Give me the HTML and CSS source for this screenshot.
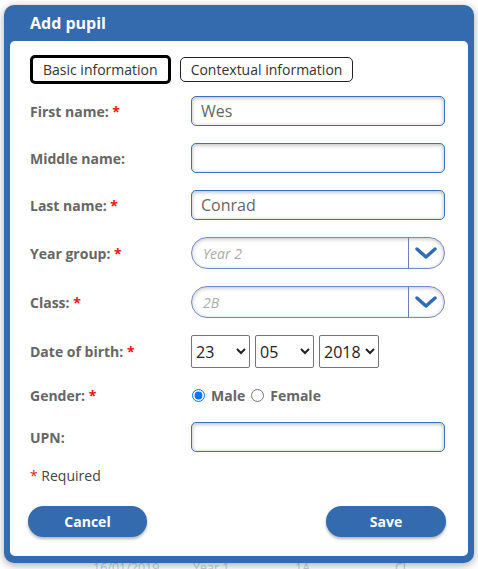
FILE: index.html
```html
<!DOCTYPE html>
<html>
<head>
<meta charset="utf-8">
<link rel="stylesheet" href="styles.css">
</head>
<body>
<div class="page">
  <div class="bg-row">
    <span class="c1">16/01/2019</span>
    <span class="c2">Year 1</span>
    <span class="c3">1A</span>
    <span class="c4">Cl</span>
  </div>
</div>
<div class="modal">
  <div class="modal-header">Add pupil</div>
  <div class="modal-body">
    <div class="tabs">
      <button class="tab tab-active">Basic information</button>
      <button class="tab">Contextual information</button>
    </div>
    <div class="form">
      <label class="lbl">First name: <span class="req">*</span></label>
      <div class="field h30"><input class="txt" type="text" value="Wes"></div>

      <label class="lbl">Middle name:</label>
      <div class="field h30"><input class="txt" type="text" value=""></div>

      <label class="lbl">Last name: <span class="req">*</span></label>
      <div class="field h30"><input class="txt" type="text" value="Conrad"></div>

      <label class="lbl">Year group: <span class="req">*</span></label>
      <div class="field h32">
        <div class="combo">
          <span class="combo-val">Year 2</span>
          <span class="combo-btn"><svg width="22" height="12" viewBox="0 0 22 12"><path d="M2 2 L11 10 L20 2" fill="none" stroke="#2f6cb2" stroke-width="3.4" stroke-linecap="round" stroke-linejoin="round"/></svg></span>
        </div>
      </div>

      <label class="lbl">Class: <span class="req">*</span></label>
      <div class="field h32">
        <div class="combo">
          <span class="combo-val">2B</span>
          <span class="combo-btn"><svg width="22" height="12" viewBox="0 0 22 12"><path d="M2 2 L11 10 L20 2" fill="none" stroke="#2f6cb2" stroke-width="3.4" stroke-linecap="round" stroke-linejoin="round"/></svg></span>
        </div>
      </div>

      <label class="lbl">Date of birth: <span class="req">*</span></label>
      <div class="field h33 dob">
        <select class="sel"><option>23</option></select>
        <select class="sel"><option>05</option></select>
        <select class="sel"><option>2018</option></select>
      </div>

      <label class="lbl">Gender: <span class="req">*</span></label>
      <div class="field h20 gender">
        <label class="radio"><input type="radio" name="g" checked> Male</label>
        <label class="radio"><input type="radio" name="g"> Female</label>
      </div>

      <label class="lbl">UPN:</label>
      <div class="field h30"><input class="txt" type="text" value=""></div>
    </div>
    <div class="required"><span class="req-plain">*</span> Required</div>
    <div class="actions">
      <button class="btn btn-cancel">Cancel</button>
      <button class="btn">Save</button>
    </div>
  </div>
</div>
</body>
</html>
```
FILE: styles.css
```css
* { box-sizing: border-box; }
html, body {
  margin: 0;
  padding: 0;
  width: 478px;
  height: 569px;
  overflow: hidden;
  background: #ffffff;
  font-family: "Open Sans", "Noto Sans", sans-serif;
}
.page {
  padding-top: 559px;
}
.bg-row {
  display: flex;
  font-size: 12.5px;
  color: #cdcdcd;
  height: 20px;
}
.bg-row .c1 { margin-left: 93px; width: 100px; }
.bg-row .c2 { width: 102px; }
.bg-row .c3 { width: 100px; }

.modal {
  position: absolute;
  left: 4px;
  top: 5px;
  width: 470px;
  background: #336bae;
  border-radius: 10px;
  padding: 0 6px 7px 6px;
  box-shadow: 0 2px 8px rgba(0,0,0,0.35);
}
.modal-header {
  height: 36px;
  line-height: 36px;
  padding-left: 20px;
  color: #ffffff;
  font-weight: 700;
  font-size: 16px;
}
.modal-body {
  background: #ffffff;
  border-radius: 5px;
  padding: 14px 22px 19px 20px;
}
.tabs {
  display: flex;
  align-items: center;
  gap: 9px;
  height: 29px;
}
.tab {
  font-family: "Open Sans", sans-serif;
  font-size: 14px;
  color: #333;
  background: #fff;
  border: 1px solid #222;
  border-radius: 5px;
  height: 25px;
  padding: 0 10px;
  line-height: 21px;
  white-space: nowrap;
}
.tab-active {
  border: 3px solid #000;
  height: 29px;
  padding: 0 10px;
}
.form {
  margin-top: 12px;
  display: grid;
  grid-template-columns: 161px 254px;
  row-gap: 17px;
  align-items: center;
}
.lbl {
  font-weight: 700;
  font-size: 14px;
  color: #666;
}
.req {
  color: #ee1111;
  font-weight: 700;
}
.field { display: flex; align-items: center; }
.h30 { height: 30px; }
.h32 { height: 32px; }
.h33 { height: 33px; }
.h20 { height: 20px; }
.txt {
  width: 100%;
  height: 100%;
  border: 1px solid #3b70b4;
  border-radius: 5px;
  box-shadow: inset 0 1px 4px rgba(0,0,0,0.3);
  font-family: "Open Sans", sans-serif;
  font-size: 16px;
  color: #666;
  padding: 0 9px;
  outline: none;
}
.combo {
  display: flex;
  width: 100%;
  height: 100%;
  border: 1px solid #7289c6;
  border-radius: 16px;
  box-shadow: inset 0 1px 4px rgba(0,0,0,0.25);
  overflow: hidden;
}
.combo-val {
  flex: 1;
  display: flex;
  align-items: center;
  padding-left: 11px;
  font-style: italic;
  font-size: 14px;
  color: #aaa;
}
.combo-btn {
  width: 36px;
  border-left: 1px solid #6c7fb8;
  display: flex;
  align-items: center;
  justify-content: center;
  padding-right: 2px;
}
.dob { gap: 5px; }
.sel {
  width: 59px;
  height: 33px;
  font-family: "Open Sans", sans-serif;
  font-size: 16px;
  color: #222;
  border: 1px solid #767676;
  border-radius: 2px;
  background: #fff;
}
.sel:last-child { width: 60px; }
.gender { gap: 6px; }
.radio {
  display: flex;
  align-items: center;
  gap: 6px;
  font-weight: 700;
  font-size: 14px;
  color: #666;
}
.radio input {
  margin: 0 0 0 1px;
  width: 13px;
  height: 13px;
}
.radio + .radio input { margin-left: 0; }
.required {
  margin-top: 14px;
  font-size: 14px;
  line-height: 20px;
  color: #444;
}
.req-plain { color: #ee1111; }
.actions {
  margin-top: 20px;
  display: flex;
  justify-content: space-between;
}
.btn {
  width: 120px;
  height: 31px;
  border: none;
  border-radius: 16px;
  background: #336bae;
  color: #fff;
  font-family: "Open Sans", sans-serif;
  font-weight: 700;
  font-size: 14px;
  box-shadow: 0 2px 3px rgba(0,0,0,0.3);
}
.btn-cancel { margin-left: -2px; width: 119px; }
```
